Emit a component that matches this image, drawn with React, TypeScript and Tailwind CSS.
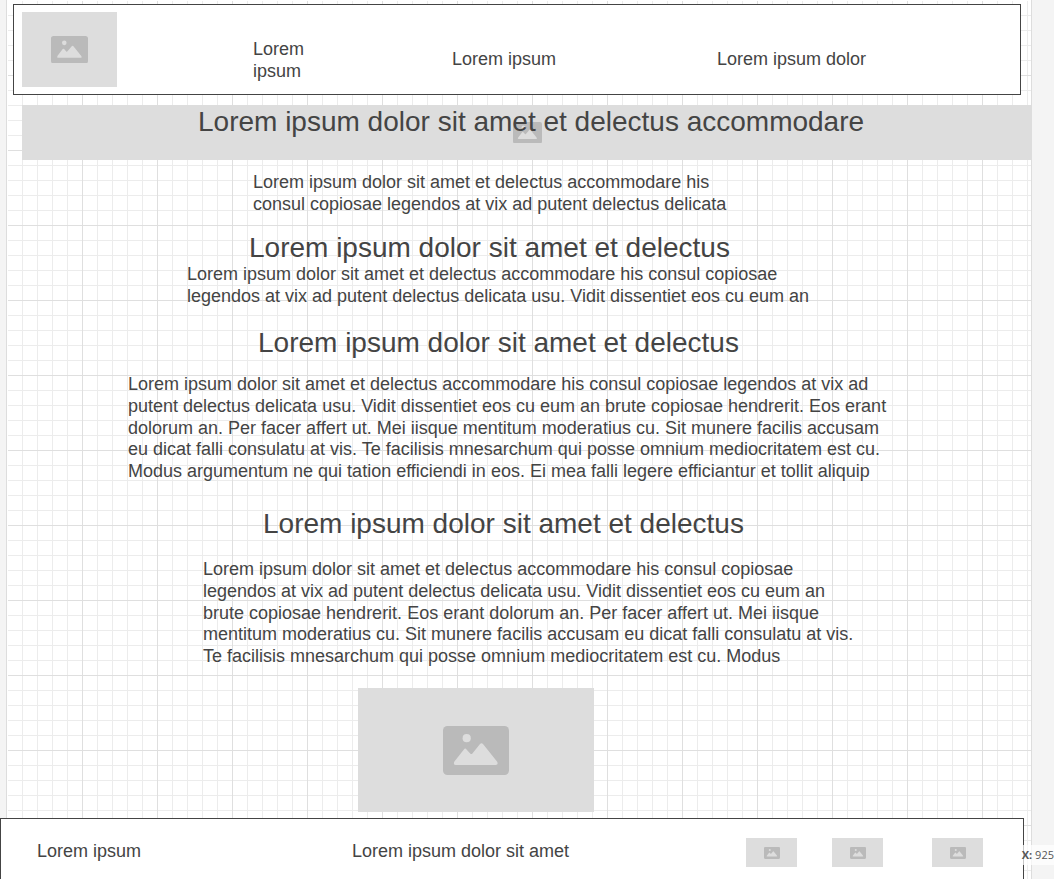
import type { ReactNode } from "react";

function Picture({ className, glyph }: { className: string; glyph: string }) {
  return (
    <div className={`flex items-center justify-center bg-[#dddddd] ${className}`}>
      <svg viewBox="0 0 66 49" className={glyph} role="img" aria-label="Image placeholder">
        <rect width="66" height="49" rx="4.5" fill="#bababa" />
        <circle cx="23.7" cy="12.2" r="4.1" fill="#dddddd" />
        <path
          d="M11.4 35.6 L20.9 23.4 Q22.2 21.8 23.5 23.4 L27.2 27.5 Q28.4 28.6 29.4 27.4 L37 18.1 Q38.5 16.4 40 18.1 L54 35.6 Q55.8 39 52.6 39 H13 Q9.8 39 11.4 35.6 Z"
          fill="#dddddd"
        />
      </svg>
    </div>
  );
}

function Heading({ className, children }: { className: string; children: ReactNode }) {
  return (
    <h2 className={`text-[28px] leading-[34px] whitespace-nowrap ${className}`}>{children}</h2>
  );
}

function Lines({ className, lines }: { className: string; lines: string[] }) {
  return (
    <p className={`whitespace-nowrap ${className}`}>
      {lines.map((line) => (
        <span key={line} className="block">
          {line}
        </span>
      ))}
    </p>
  );
}

export default function App() {
  return (
    <div className="relative min-h-screen overflow-hidden bg-[#f4f4f4] pr-[22px] pl-[6px] font-['Liberation_Sans',Arial,sans-serif] text-[18px] leading-[1.2] text-[#444444]">
      <div className="flex min-h-screen flex-col border-x border-[#dddddd] bg-white pt-px pl-px">
        <div className="flex grow flex-col bg-[linear-gradient(to_right,transparent_74px,#dfdfdf_74px),linear-gradient(to_bottom,transparent_74px,#dfdfdf_74px),linear-gradient(to_right,transparent_14px,#ececec_14px),linear-gradient(to_bottom,transparent_14px,#ececec_14px)] bg-[size:75px_75px,75px_75px,15px_15px,15px_15px] pt-[3px]">
          <header className="mr-[10px] ml-[5px] border border-[#444444] bg-white px-2 py-[7px]">
            <nav className="grid grid-cols-[231fr_199fr_265fr_295fr]">
              <Picture className="h-[75px] w-[95px]" glyph="w-[37px]" />
              <a href="#" className="mt-[27px] w-16">
                Lorem ipsum
              </a>
              <a href="#" className="mt-[37px]">
                Lorem ipsum
              </a>
              <a href="#" className="mt-[37px]">
                Lorem ipsum dolor
              </a>
            </nav>
          </header>

          <section className="mt-[10px] -mr-px ml-[14px] grid grid-cols-1">
            <Picture className="col-start-1 row-start-1 h-[55px]" glyph="w-[29px]" />
            <h1 className="col-start-1 row-start-1 ml-[176px] text-[28px] leading-[34px] whitespace-nowrap">
              Lorem ipsum dolor sit amet et delectus accommodare
            </h1>
          </section>

          <main>
            <Lines
              className="mt-3 ml-[245px]"
              lines={[
                "Lorem ipsum dolor sit amet et delectus accommodare his",
                "consul copiosae legendos at vix ad putent delectus delicata",
              ]}
            />
            <Heading className="mt-4 ml-[241px]">Lorem ipsum dolor sit amet et delectus</Heading>
            <Lines
              className="-mt-px ml-[179px]"
              lines={[
                "Lorem ipsum dolor sit amet et delectus accommodare his consul copiosae",
                "legendos at vix ad putent delectus delicata usu. Vidit dissentiet eos cu eum an",
              ]}
            />
            <Heading className="mt-[19px] ml-[250px]">Lorem ipsum dolor sit amet et delectus</Heading>
            <Lines
              className="mt-[14px] ml-[120px]"
              lines={[
                "Lorem ipsum dolor sit amet et delectus accommodare his consul copiosae legendos at vix ad",
                "putent delectus delicata usu. Vidit dissentiet eos cu eum an brute copiosae hendrerit. Eos erant",
                "dolorum an. Per facer affert ut. Mei iisque mentitum moderatius cu. Sit munere facilis accusam",
                "eu dicat falli consulatu at vis. Te facilisis mnesarchum qui posse omnium mediocritatem est cu.",
                "Modus argumentum ne qui tation efficiendi in eos. Ei mea falli legere efficiantur et tollit aliquip",
              ]}
            />
            <Heading className="mt-[25px] ml-[255px]">Lorem ipsum dolor sit amet et delectus</Heading>
            <Lines
              className="mt-[18px] ml-[195px]"
              lines={[
                "Lorem ipsum dolor sit amet et delectus accommodare his consul copiosae",
                "legendos at vix ad putent delectus delicata usu. Vidit dissentiet eos cu eum an",
                "brute copiosae hendrerit. Eos erant dolorum an. Per facer affert ut. Mei iisque",
                "mentitum moderatius cu. Sit munere facilis accusam eu dicat falli consulatu at vis.",
                "Te facilisis mnesarchum qui posse omnium mediocritatem est cu. Modus",
              ]}
            />
            <Picture className="mt-[21px] ml-[350px] h-[124px] w-[236px]" glyph="w-[66px]" />
          </main>

          <footer className="mt-[6px] mr-[7px] -ml-2 grid grow grid-cols-[315fr_394fr_86fr_100fr_91fr] content-start items-center border-x border-t border-[#444444] bg-white pt-[19px] pl-9">
            <p className="pb-[3px]">Lorem ipsum</p>
            <p className="pb-[3px]">Lorem ipsum dolor sit amet</p>
            <Picture className="h-[29px] w-[51px]" glyph="w-4" />
            <Picture className="h-[29px] w-[51px]" glyph="w-4" />
            <Picture className="h-[29px] w-[51px]" glyph="w-4" />
          </footer>
        </div>
      </div>

      <div className="absolute right-0 bottom-[14px] bg-white/70 font-['Open_Sans',sans-serif] text-[11px] leading-5 text-[#555555]">
        <b>X:</b> 925
      </div>
    </div>
  );
}
